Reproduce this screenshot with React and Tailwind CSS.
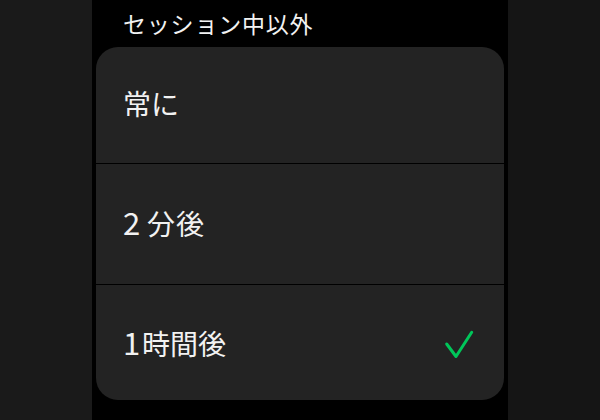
export default function App() {
  const rows = [
    { label: <span>常に</span>, checked: false, h: "h-[116px] pb-[4px]" },
    {
      label: (
        <span className="flex items-baseline">
          <span className="inline-block w-[24px] text-[31px]">2</span>
          <span className="tracking-[1px]">分後</span>
        </span>
      ),
      checked: false,
      h: "h-[120px] pb-[5px]",
    },
    {
      label: (
        <span className="flex items-baseline">
          <span className="inline-block w-[19px] text-[31px]">1</span>
          <span>時間後</span>
        </span>
      ),
      checked: true,
      h: "h-[115px] pb-[2px]",
    },
  ];
  return (
    <div
      className="flex h-[420px] w-[600px] overflow-hidden bg-black text-[#f2f2f2]"
      style={{ fontFamily: '"Noto Sans CJK JP", "Noto Sans", sans-serif' }}
    >
      <div className="h-full w-[92px] bg-[#1a1a1a]" />
      <div className="flex h-full w-[416px] flex-col px-[4px]">
        <div className="flex h-[47px] items-start pl-[27px] pt-[8px] text-[23px] leading-[30px] tracking-[0.8px]">
          セッション中以外
        </div>
        <div className="flex h-[353px] w-[408px] flex-col overflow-hidden rounded-[22px] bg-[#232323]">
          {rows.map((r, i) => (
            <div key={i} className="flex flex-col">
              {i > 0 && <div className="h-px bg-black" />}
              <div
                className={`flex ${r.h} items-center justify-between pl-[27px] pr-[30px] text-[28px] leading-none`}
              >
                {r.label}
                {r.checked && (
                  <svg width="30" height="30" viewBox="0 0 30 30" fill="none" className="mt-[5px]">
                    <path
                      d="M2.7 15 L12 27.5 L27.7 3.3"
                      stroke="#00c65a"
                      strokeWidth="3"
                      strokeLinecap="round"
                      strokeLinejoin="round"
                    />
                  </svg>
                )}
              </div>
            </div>
          ))}
        </div>
      </div>
      <div className="h-full flex-1 bg-[#151515]" />
    </div>
  );
}
